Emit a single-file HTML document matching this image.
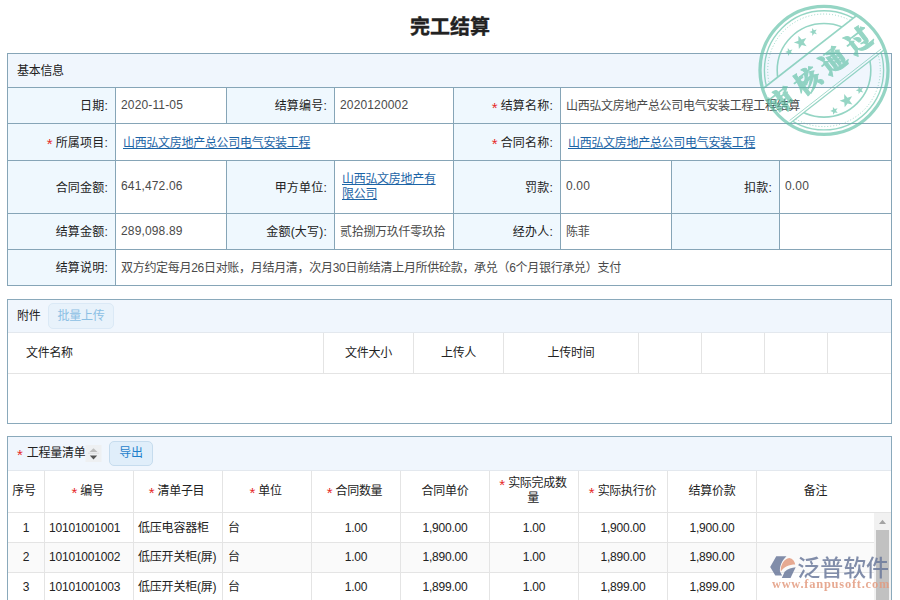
<!DOCTYPE html>
<html lang="zh-CN">
<head>
<meta charset="utf-8">
<title>完工结算</title>
<style>
html,body{margin:0;padding:0;}
body{width:900px;height:600px;overflow:hidden;background:#fff;position:relative;
  font-family:"Liberation Sans","Noto Sans CJK SC",sans-serif;font-size:12px;letter-spacing:-.3px;color:#333;}
.title{position:absolute;left:0;top:12px;width:900px;text-align:center;font-size:20px;letter-spacing:-.3px;font-weight:bold;color:#222;-webkit-text-stroke:.35px #222;line-height:30px;letter-spacing:0;}
/* form */
.form{position:absolute;left:7px;top:53px;width:883px;background:#86a5b7;padding:1px;display:grid;gap:1px;
  grid-template-columns:107px 110px 107px 118px 106px 110px 107px 111px;
  grid-template-rows:33px 35px 36px 52px 35px 35px;}
.form>div{background:#fff;display:flex;align-items:center;box-sizing:border-box;padding:0 0 2px 5px;color:#4a4a4a;overflow:hidden;white-space:nowrap;}
.form>.l{background:#eff8fe;justify-content:flex-end;padding:0 7px 2px 0;color:#222;letter-spacing:.2px;}
.form>.h{background:#f0f6fd;grid-column:1 / span 8;padding:0 0 3px 9px;color:#222;}
.req{color:#e62828;margin-right:3px;font-size:15px;line-height:0;position:relative;top:3px;letter-spacing:0;font-family:'Liberation Sans',sans-serif;}
a.lk{color:#1c64a6;text-decoration:underline;}
/* panels */
.panel{position:absolute;left:7px;width:883px;border:1px solid #8aa9bb;background:#fff;}
.phead{background:#f0f6fd;border-bottom:1px solid #e3e8ee;position:relative;}
.btn{position:absolute;box-sizing:border-box;border:1px solid #dbe9f6;background:#e8f2fb;border-radius:5px;text-align:center;}
.gh{position:absolute;top:0;height:100%;border-right:1px solid #e4e4e4;box-sizing:border-box;display:flex;align-items:center;justify-content:center;text-align:center;color:#222;padding:0 0 4px 0;}
.row{position:absolute;left:0;width:866px;height:29px;border-bottom:1px solid #e4e4e4;}
.row>div{position:absolute;top:0;height:29px;line-height:29px;font-size:12px;letter-spacing:-.2px;border-right:1px solid #e4e4e4;box-sizing:border-box;color:#222;}
.r1>div{line-height:31px !important;}
</style>
</head>
<body>
<div class="title">完工结算</div>

<div class="form">
  <div class="h">基本信息</div>

  <div class="l">日期:</div><div style="letter-spacing:.15px">2020-11-05</div>
  <div class="l">结算编号:</div><div style="letter-spacing:.15px">2020120002</div>
  <div class="l"><span class="req">*</span>结算名称:</div><div style="grid-column:span 3">山西弘文房地产总公司电气安装工程工程结算</div>

  <div class="l"><span class="req">*</span>所属项目:</div><div style="grid-column:span 3;padding-left:7px"><a class="lk">山西弘文房地产总公司电气安装工程</a></div>
  <div class="l"><span class="req">*</span>合同名称:</div><div style="grid-column:span 3;padding-left:7px"><a class="lk">山西弘文房地产总公司电气安装工程</a></div>

  <div class="l">合同金额:</div><div style="letter-spacing:.15px">641,472.06</div>
  <div class="l">甲方单位:</div><div style="padding:0 10px 1px 7px;white-space:normal;line-height:15px"><a class="lk">山西弘文房地产有限公司</a></div>
  <div class="l">罚款:</div><div style="letter-spacing:.15px">0.00</div>
  <div class="l">扣款:</div><div style="letter-spacing:.15px">0.00</div>

  <div class="l">结算金额:</div><div style="letter-spacing:.15px">289,098.89</div>
  <div class="l">金额(大写):</div><div>贰拾捌万玖仟零玖拾</div>
  <div class="l">经办人:</div><div>陈菲</div>
  <div class="l"></div><div></div>

  <div class="l">结算说明:</div><div style="grid-column:span 7">双方约定每月26日对账，月结月清，次月30日前结清上月所供砼款，承兑（6个月银行承兑）支付</div>
</div>

<!-- attachments -->
<div class="panel" style="top:299px;height:123px;">
  <div class="phead" style="height:32px;">
    <span style="position:absolute;left:9px;top:0;line-height:32px;color:#222;">附件</span>
    <div class="btn" style="left:40px;top:3px;width:66px;height:26px;line-height:24px;color:#8cc0e4;">批量上传</div>
  </div>
  <div style="position:relative;height:40px;border-bottom:1px solid #e4e4e4;">
    <div class="gh" style="left:0;width:316px;justify-content:flex-start;padding-left:18px;">文件名称</div>
    <div class="gh" style="left:316px;width:90px;">文件大小</div>
    <div class="gh" style="left:406px;width:90px;">上传人</div>
    <div class="gh" style="left:496px;width:135px;">上传时间</div>
    <div class="gh" style="left:631px;width:63px;"></div>
    <div class="gh" style="left:694px;width:63px;"></div>
    <div class="gh" style="left:757px;width:63px;"></div>
    <div class="gh" style="left:820px;width:63px;border-right:none;"></div>
  </div>
</div>

<!-- grid -->
<div class="panel" style="top:436px;height:170px;">
  <div class="phead" style="height:33px;">
    <span style="position:absolute;left:9px;top:0;line-height:33px;color:#222;"><span class="req" style="margin-right:4px">*</span>工程量清单</span>
    <svg style="position:absolute;left:77px;top:8px" width="17" height="17" viewBox="0 0 17 17"><rect x="0.5" y="0" width="16" height="17" fill="#eef0f2"/><path d="M4.5 7 L8.5 3.2 L12.5 7 Z" fill="#bdbdbd"/><path d="M3 8.2 H14" stroke="#d5d5d5" stroke-width="0.6"/><path d="M4.8 10.6 L8.5 14.6 L12.2 10.6 Z" fill="#555"/></svg>
    <div class="btn" style="left:101px;top:4px;width:44px;height:25px;line-height:23px;color:#1f7fcb;border-color:#c6dcee;background:#e0eefa;">导出</div>
  </div>
  <div style="position:relative;height:41px;border-bottom:1px solid #e4e4e4;">
    <div class="gh" style="left:0;width:37px;padding-right:4px;">序号</div>
    <div class="gh" style="left:37px;width:89px;padding-right:3px;"><span class="req">*</span>编号</div>
    <div class="gh" style="left:126px;width:89px;padding-right:3px;"><span class="req">*</span>清单子目</div>
    <div class="gh" style="left:215px;width:89px;padding-right:3px;"><span class="req">*</span>单位</div>
    <div class="gh" style="left:304px;width:89px;padding-right:3px;"><span class="req">*</span>合同数量</div>
    <div class="gh" style="left:393px;width:89px;">合同单价</div>
    <div class="gh" style="left:482px;width:89px;line-height:14.5px;padding:0 11px 2px 9px;"><span><span class="req">*</span>实际完成数量</span></div>
    <div class="gh" style="left:571px;width:89px;padding-right:1px;"><span class="req">*</span>实际执行价</div>
    <div class="gh" style="left:660px;width:89px;">结算价款</div>
    <div class="gh" style="left:749px;width:117px;border-right:none;">备注</div>
  </div>
  <div style="position:relative;height:100px;">
    <div style="position:absolute;left:866px;top:0;width:17px;height:100px;background:#f1f1f1;"></div>
    <svg style="position:absolute;left:866px;top:0" width="17" height="17" viewBox="0 0 17 17"><path d="M5 11 L8.5 6.8 L12 11 Z" fill="#a3a3a3"/></svg>
    <div style="position:absolute;left:868px;top:17px;width:13px;height:90px;background:#c1c1c1;"></div>
    <div class="row r1" style="top:0px"><div style="left:0px;width:37px;text-align:center;">1</div><div style="left:37px;width:89px;padding-left:4px;">10101001001</div><div style="left:126px;width:89px;padding-left:4px;">低压电容器柜</div><div style="left:215px;width:89px;padding-left:5px;">台</div><div style="left:304px;width:89px;text-align:center;">1.00</div><div style="left:393px;width:89px;text-align:center;">1,900.00</div><div style="left:482px;width:89px;text-align:center;">1.00</div><div style="left:571px;width:89px;text-align:center;">1,900.00</div><div style="left:660px;width:89px;text-align:center;">1,900.00</div><div style="left:749px;width:117px;text-align:center;border-right:none;"></div></div>
    <div class="row" style="top:30px;background:#fafafa"><div style="left:0px;width:37px;text-align:center;">2</div><div style="left:37px;width:89px;padding-left:4px;">10101001002</div><div style="left:126px;width:89px;padding-left:4px;">低压开关柜(屏)</div><div style="left:215px;width:89px;padding-left:5px;">台</div><div style="left:304px;width:89px;text-align:center;">1.00</div><div style="left:393px;width:89px;text-align:center;">1,890.00</div><div style="left:482px;width:89px;text-align:center;">1.00</div><div style="left:571px;width:89px;text-align:center;">1,890.00</div><div style="left:660px;width:89px;text-align:center;">1,890.00</div><div style="left:749px;width:117px;text-align:center;border-right:none;"></div></div>
    <div class="row" style="top:60px"><div style="left:0px;width:37px;text-align:center;">3</div><div style="left:37px;width:89px;padding-left:4px;">10101001003</div><div style="left:126px;width:89px;padding-left:4px;">低压开关柜(屏)</div><div style="left:215px;width:89px;padding-left:5px;">台</div><div style="left:304px;width:89px;text-align:center;">1.00</div><div style="left:393px;width:89px;text-align:center;">1,899.00</div><div style="left:482px;width:89px;text-align:center;">1.00</div><div style="left:571px;width:89px;text-align:center;">1,899.00</div><div style="left:660px;width:89px;text-align:center;">1,899.00</div><div style="left:749px;width:117px;text-align:center;border-right:none;"></div></div>
  </div>
</div>
<svg id="stamp" style="position:absolute;left:750px;top:0;opacity:.66" width="150" height="145" viewBox="750 0 150 145">
  <defs><mask id="bandmask" maskUnits="userSpaceOnUse" x="750" y="0" width="150" height="145">
    <rect x="750" y="0" width="150" height="145" fill="#fff"/>
    <rect x="750" y="47.199999999999996" width="150" height="44" fill="#000" transform="rotate(-38 824 70.3)"/>
  </mask></defs>
  <circle cx="824" cy="70.3" r="64" fill="none" stroke="#5fc0a6" stroke-width="3.3"/>
  <g fill="none" stroke="#5fc0a6" mask="url(#bandmask)">
    <circle cx="824" cy="70.3" r="59.6" stroke-width="1.4"/>
    <circle cx="824" cy="70.3" r="56.3" stroke-width="1" stroke-dasharray="1 2"/>
    <circle cx="824" cy="70.3" r="46.8" stroke-width="1.6"/>
  </g>
  <g transform="rotate(-38 824 70.3)">
    <line x1="763.5" y1="47.199999999999996" x2="884.5" y2="47.199999999999996" stroke="#5fc0a6" stroke-width="1.8"/>
    <line x1="763.5" y1="91.19999999999999" x2="884.5" y2="91.19999999999999" stroke="#5fc0a6" stroke-width="1.2"/>
    <line x1="766" y1="88.69999999999999" x2="882" y2="88.69999999999999" stroke="#5fc0a6" stroke-width="0.8"/>
    <text x="824.3" y="78" text-anchor="middle" font-family="'Noto Serif CJK SC','Noto Sans CJK SC',serif" font-weight="900" font-size="26" letter-spacing="6.5" fill="#5fc0a6" stroke="#5fc0a6" stroke-width="1">审核通过</text>
  </g>
  <g fill="#5fc0a6"><polygon points="787.8,48.1 789.7,50.3 792.4,49.5 790.9,51.9 792.6,54.3 789.8,53.6 788.1,55.9 787.8,53.1 785.1,52.1 787.8,51.0"/><polygon points="798.4,35.7 801.6,39.5 806.3,38.0 803.7,42.2 806.6,46.2 801.8,45.1 798.9,49.0 798.5,44.1 793.8,42.5 798.4,40.7"/><polygon points="812.1,28.1 814.0,30.3 816.7,29.5 815.2,31.9 816.9,34.3 814.1,33.6 812.4,35.9 812.1,33.1 809.4,32.1 812.1,31.0"/><polygon points="832.9,106.9 834.8,109.1 837.5,108.3 836.0,110.7 837.7,113.1 834.9,112.4 833.2,114.7 832.9,111.9 830.2,110.9 832.9,109.8"/><polygon points="844.2,94.0 847.4,97.8 852.1,96.3 849.5,100.5 852.4,104.5 847.6,103.4 844.7,107.3 844.3,102.4 839.6,100.8 844.2,99.0"/><polygon points="858.4,86.3 860.3,88.5 863.0,87.7 861.5,90.1 863.2,92.5 860.4,91.8 858.7,94.1 858.4,91.3 855.7,90.3 858.4,89.2"/></g>
</svg>
<svg id="wm" style="position:absolute;left:760px;top:545px;opacity:.85" width="140" height="55" viewBox="0 0 900 354">
  <path d="M65,141 L104,72 L170,72 C140,100 125,135 128,170 L142,196 L98,196 Z" fill="#6c7a9c"/>
  <path d="M133,172 C130,125 155,90 188,84 C210,88 223,104 226,126 C188,126 152,142 133,172 Z" fill="#e39b7f"/>
  <path d="M140,213 L158,172 C178,152 205,145 229,143 L196,213 Z" fill="#6c7a9c"/>
  <text x="240" y="198" font-family="'Noto Sans CJK SC',sans-serif" font-weight="500" font-size="146" textLength="590" lengthAdjust="spacingAndGlyphs" fill="#6c7a9c">泛普软件</text>
  <text x="76" y="277" font-family="'Liberation Serif',serif" font-weight="bold" font-size="80" textLength="755" lengthAdjust="spacing" fill="#e39b7f">www.fanpusoft.com</text>
</svg>
</body>
</html>
